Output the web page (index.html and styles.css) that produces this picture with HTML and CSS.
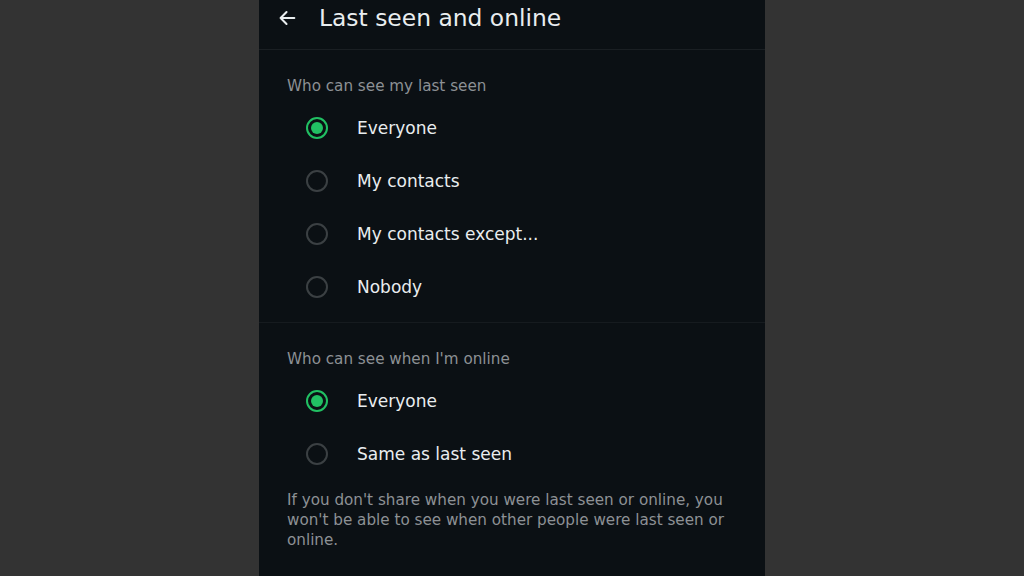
FILE: index.html
```html
<!DOCTYPE html>
<html lang="en">
<head>
    <meta charset="UTF-8">
    <meta name="viewport" content="width=device-width, initial-scale=1.0">
    <title>Last seen and online</title>
    <link rel="stylesheet" href="styles.css">
</head>
<body>
<div class="screen">
    <div class="header">
        <button class="back-button" type="button">
            <svg width="22" height="22" viewBox="0 0 24 24">
                <path d="M20 12H5M11.5 5.5L5 12l6.5 6.5" fill="none" stroke="#e9edef" stroke-width="2.2" stroke-linecap="round" stroke-linejoin="round"/>
            </svg>
        </button>
        <h1>Last seen and online</h1>
    </div>

    <div class="section">
        <div class="section-title">Who can see my last seen</div>
        <label class="option"><span class="radio checked"></span>Everyone</label>
        <label class="option"><span class="radio"></span>My contacts</label>
        <label class="option"><span class="radio"></span>My contacts except...</label>
        <label class="option"><span class="radio"></span>Nobody</label>
    </div>

    <div class="section last">
        <div class="section-title">Who can see when I'm online</div>
        <label class="option"><span class="radio checked"></span>Everyone</label>
        <label class="option"><span class="radio"></span>Same as last seen</label>
        <p class="note">If you don't share when you were last seen or online, you won't be able to see when other people were last seen or online.</p>
    </div>
</div>
</body>
</html>
```

FILE: styles.css
```css
body {
    background: #333333;
    font-family: "DejaVu Sans", sans-serif;
    margin: 0;
}

.screen {
    width: 506px;
    height: 576px;
    margin-left: 259px;
    background: #0b1014;
    overflow: hidden;
}

.header {
    height: 49px;
    display: flex;
    align-items: flex-start;
    border-bottom: 1px solid #1a1f23;
}

.back-button {
    background: none;
    border: none;
    padding: 0;
    margin: 7px 0 0 17px;
    width: 22px;
    height: 22px;
    cursor: pointer;
}

.header h1 {
    margin: 0 0 0 21px;
    color: #e9edef;
    font-size: 23.4px;
    font-weight: normal;
    line-height: 36px;
}

.section {
    padding: 26px 28px 9px 28px;
    border-bottom: 1px solid #161b1f;
}

.section.last {
    border-bottom: none;
}

.section-title {
    color: #8d9195;
    font-size: 15.2px;
    line-height: 20px;
    margin-bottom: 5px;
}

.option {
    height: 53px;
    display: flex;
    align-items: center;
    color: #e9edef;
    font-size: 17px;
    padding-left: 19px;
    cursor: pointer;
}

.radio {
    width: 18px;
    height: 18px;
    border: 2px solid #3b4043;
    border-radius: 50%;
    margin-right: 29px;
    display: flex;
    align-items: center;
    justify-content: center;
}

.radio.checked {
    border-color: #21c063;
}

.radio.checked::after {
    content: "";
    width: 12px;
    height: 12px;
    border-radius: 50%;
    background: #21c063;
}

.note {
    margin: 10px 0 0 0;
    color: #8d9195;
    font-size: 15.2px;
    line-height: 20px;
}
```
